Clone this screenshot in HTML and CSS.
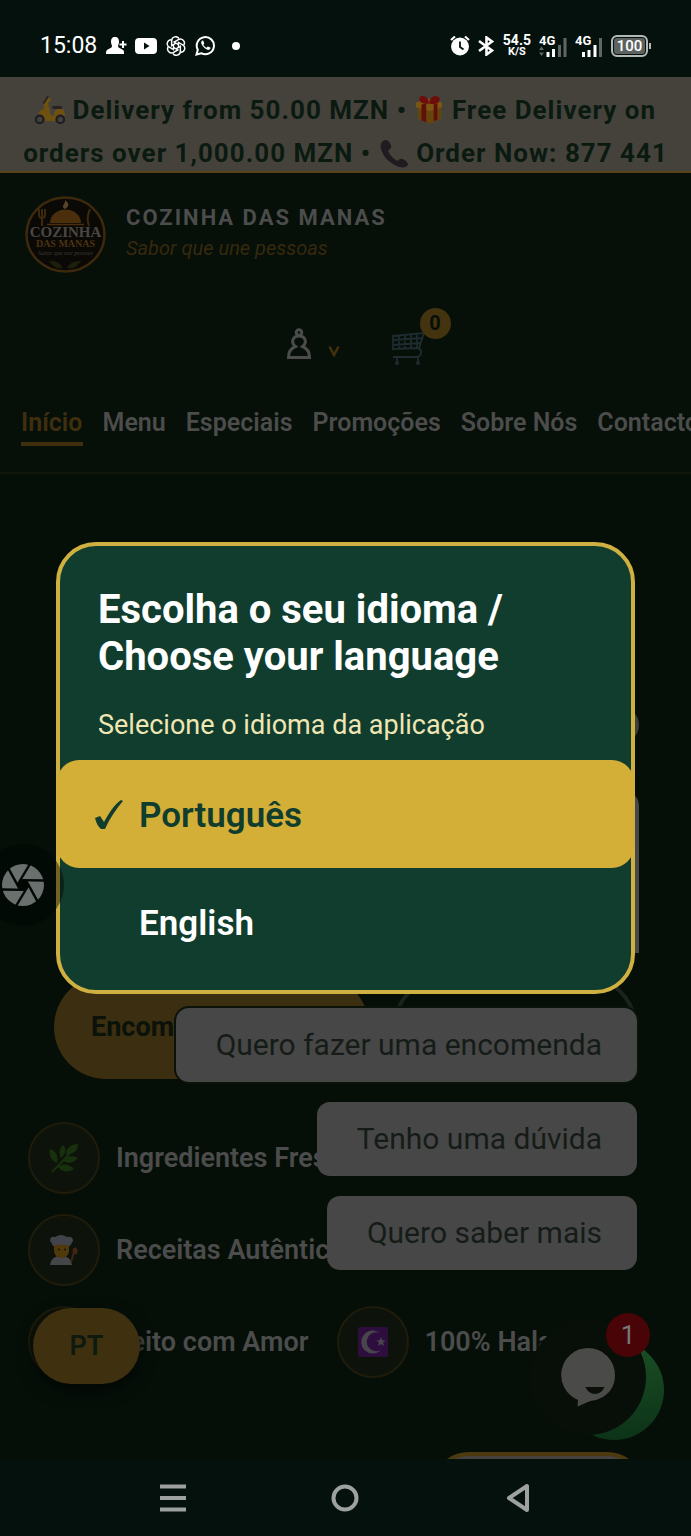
FILE: index.html
```html
<!DOCTYPE html>
<html lang="pt">
<head>
<meta charset="utf-8">
<meta name="viewport" content="width=device-width, initial-scale=1">
<title>Cozinha das Manas</title>
<link rel="stylesheet" href="styles.css">
</head>
<body>
<div class="screen">
  <div class="status">
    <div class="status-group">
      <span class="clock">15:08</span>
      <svg class="st-person" width="20" height="19" viewBox="0 0 20 19" fill="#fff"><path d="M9 1c3 0 4 2 4 5 0 2-1 3-1 4 0 2 2 2 5 4 1 .6 1 2 1 4H0c0-2 0-3 1-4 3-2 5-2 5-4 0-1-1-2-1-4 0-3 1-5 4-5z"/><path d="M17 5v7M13.500 8.500h7" stroke="#fff" stroke-width="2"/></svg>
      <svg width="22" height="16" viewBox="0 0 22 16"><rect width="22" height="16" rx="4" fill="#fff"/><path d="M9 4.500v7l5.500-3.500z" fill="#04110d"/></svg>
      <svg width="20" height="20" viewBox="1 1 22 22" fill="none" stroke="#fff" stroke-width="1.600"><path id="petal" d="M12 8.800L7.200 11.600V6.200a4.400 4.400 0 0 1 8.200-2.200"/><use href="#petal" transform="rotate(60 12 12)"/><use href="#petal" transform="rotate(120 12 12)"/><use href="#petal" transform="rotate(180 12 12)"/><use href="#petal" transform="rotate(240 12 12)"/><use href="#petal" transform="rotate(300 12 12)"/></svg>
      <svg width="21" height="21" viewBox="0 0 21 21" fill="none" stroke="#fff" stroke-width="2"><path d="M1.500 19.500l1.300-4.700a8.600 8.600 0 1 1 3.400 3.400z"/><path d="M7.200 5.500c-1.500 1-1.400 3 .5 5.500s4.500 4.300 6.300 3.800c1.300-.4 1.600-1.500 1.400-2.200l-2.600-1.200-1.200 1.400c-1.500-.6-2.600-1.700-3.300-3.100l1-1.200-1-2.700z" fill="#fff" stroke="none"/></svg>
      <svg class="st-dot" width="8" height="8" viewBox="0 0 8 8"><circle cx="4" cy="4" r="4" fill="#fff"/></svg>
    </div>
    <div class="status-group status-right">
      <svg width="20" height="21" viewBox="0 0 20 21"><circle cx="10" cy="11.500" r="9" fill="#fff"/><path d="M1 5l4-3.500M19 5l-4-3.500" stroke="#fff" stroke-width="2.200"/><path d="M10 6.500v5.500l3.500 2.500" stroke="#04110d" stroke-width="1.800" fill="none"/></svg>
      <svg width="17" height="20" viewBox="0 0 17 20" fill="none" stroke="#fff" stroke-width="2.600"><path d="M1 5l13 9.500-5.500 4V1.500L14 5.500 1 15"/></svg>
      <span class="speed"><b>54.5</b><small>K/S</small></span>
      <svg width="28" height="24" viewBox="0 0 28 24"><text x="0" y="11" class="net">4G</text><path d="M0 16l2.500-3.500 2.500 3.500zM0 18.500l2.500 3.500 2.500-3.500z" fill="#5f6664"/><path d="M9 23v-5M14.500 23v-8" stroke="#fff" stroke-width="3"/><path d="M20.500 23V11M26 23V4" stroke="#5f6664" stroke-width="3"/></svg>
      <svg width="28" height="24" viewBox="0 0 28 24"><text x="0" y="11" class="net">4G</text><path d="M8.500 23v-5M14 23v-7M20 23V11" stroke="#fff" stroke-width="3"/><path d="M25.500 23V4" stroke="#5f6664" stroke-width="3"/></svg>
      <span class="battery">100</span>
    </div>
  </div>

  <div class="app">
    <div class="banner">
      <svg class="emoji" viewBox="0 0 32 32"><path d="M11 3l4-1 2 4-3 2 2 10q0 4 4 4 0-5 4-7h6q2 4 2 8l-7 1-4 4H11Q9 20 3 20q3-5 7-5L9 7z" fill="#6e5110"/><path d="M18 12q6-1 11 0v3H19z" fill="#2b2022"/><path d="M9 9l5-8" stroke="#25222a" stroke-width="2"/><g fill="#45423c" stroke="#1f1d24" stroke-width="2.500"><circle cx="5" cy="26" r="4"/><circle cx="27" cy="26" r="4"/></g></svg>
      Delivery from 50.00 MZN •
      <svg class="emoji" viewBox="0 0 32 32"><path d="M4 12l13 4 12-4v13l-12 6-13-6z" fill="#66440e"/><path d="M2 8l14-4 14 4v5l-13 4L2 13z" fill="#7a5513"/><path d="M8 10l5-1v20l-5-2zM21 10l4-1v17l-4 2z" fill="#601008"/><path d="M16 9C4 11 3 0 10 1q5 1 6 8 1-8 7-8 7 1 3 7-3 3-10 1z" fill="#6e0d0b"/></svg>
      Free Delivery on orders over 1,000.00 MZN •
      <svg class="emoji" viewBox="0 0 32 32"><path d="M8 2C4 2 1 5 2 11c2 9 10 17 20 20 5 1 8 0 9-3 0-2-5-6-7-6-3 0-3 3-5 2-4-2-8-7-9-10 0-2 3-2 3-5 0-2-3-7-5-7z" fill="#1f1b20"/></svg>
      Order Now: 877 441
    </div>

    <header class="header">
      <div class="brand">
        <svg class="logo" viewBox="0 0 81 77">
          <ellipse cx="40.500" cy="38.500" rx="39" ry="37" fill="#0a0906" stroke="#3d290d" stroke-width="2.500"/>
          <path d="M25 27a15 13 0 0 1 31 0z" fill="#4b2f0c"/><path d="M22 28.500h37" stroke="#4b2f0c" stroke-width="1.500"/>
          <path d="M40 13c-5-3 1-5 0-9 5 4 4 6 0 9z" fill="#59442a"/>
          <path d="M14 13v6q0 3 3 3t3-3v-6M17 13v17M65 13q-4 9-1 17" stroke="#3d290d" stroke-width="2" fill="none"/>
          <text x="40.500" y="41" class="logo-a">COZINHA</text>
          <text x="40.500" y="51" class="logo-b">DAS MANAS</text>
          <text x="40.500" y="59" class="logo-c">Sabor que une pessoas</text>
          <path d="M38 72q-8 2-14-7 10-1 14 7zM42 72q8 2 14-7-10-1-14 7z" fill="#1c200b"/>
        </svg>
        <div class="brand-text">
          <div class="brand-name">COZINHA DAS MANAS</div>
          <div class="tagline">Sabor que une pessoas</div>
        </div>
      </div>
      <div class="actions">
        <button class="icon-btn" aria-label="Conta">
          <svg width="26" height="32" viewBox="0 0 26 32" fill="none" stroke="#4b4c4b" stroke-width="3"><circle cx="13" cy="4.500" r="2.800"/><path d="M2.500 29.500h21c0-6-2-9-7-11 5-4 3-10.500-3.500-10.500S4.500 14.500 9.500 18.500c-5 2-7 5-7 11z"/></svg>
          <svg class="caret" width="12" height="12" viewBox="0 0 12 12" fill="none" stroke="#43310e" stroke-width="2.600"><path d="M1.500 1.500l4.500 8.500 4.500-8.500"/></svg>
        </button>
        <button class="icon-btn cart" aria-label="Carrinho">
          <svg width="36" height="34" viewBox="0 0 36 34" fill="none" stroke="#1e2c30" stroke-width="1.800"><path d="M1 4l31-3-5 15-26 1zM2 8l28-2M2 13l26-2M7 4v13M13 3v14M19 3v13M25 2v14M27 16c4 4 2 9-3 9H1M32 1l3-1M5 25v6M26 25v6"/><circle cx="5" cy="31" r="1.200"/><circle cx="26" cy="31" r="1.200"/></svg>
          <span class="cart-count">0</span>
        </button>
      </div>
      <nav class="nav">
        <a href="#" class="active">Início</a><a href="#">Menu</a><a href="#">Especiais</a><a href="#">Promoções</a><a href="#">Sobre Nós</a><a href="#">Contactos</a>
      </nav>
    </header>

    <main class="hero">
      <div class="cta">
        <button class="cta-main">Encomendar Agora</button>
        <button class="cta-alt">Ver Menu</button>
      </div>
      <ul class="features">
        <li><span class="ring"><svg width="30" height="30" viewBox="0 0 30 30" fill="#17300d"><path d="M3 29C10 22 17 15 26 4" stroke="#17300d" stroke-width="2"/><path d="M8 20C1 17 0 11 1 6c6 2 9 7 7 14zM12 15c-3-5-1-10 2-13 4 4 3 9-2 13zM17 11c0-6 5-10 12-10 0 7-5 11-12 10zM14 18c3-5 9-6 15-3-4 5-10 6-15 3zM9 24c5-4 11-3 16 2-6 4-12 3-16-2z"/></svg></span>Ingredientes Frescos</li>
        <li><span class="ring"><svg width="30" height="30" viewBox="0 0 30 30"><path d="M1 30q1-9 11-9t11 9z" fill="#45464a"/><path d="M5 9h15v7q-1 7-7.500 7T5 16z" fill="#503a0b"/><path d="M4 11q-1-3-3-5 0-5 5-4 6-4 12 0 6-1 6 4l-3 5q-9-3-17 0z" fill="#42434a"/><path d="M9 14.500h2M15 14.500h2" stroke="#161008" stroke-width="1.600"/><path d="M22 27l3-10" stroke="#412416" stroke-width="2"/><ellipse cx="26" cy="16" rx="2.500" ry="3.500" fill="#412416"/></svg></span>Receitas Autênticas</li>
        <li><span class="ring"></span>Feito com Amor</li>
        <li><span class="ring"><svg width="30" height="30" viewBox="0 0 30 30"><rect width="30" height="30" rx="2" fill="#2e0e3f"/><path d="M22 6A11.500 11.500 0 1 0 23 23 9.500 9.500 0 1 1 22 6z" fill="#48454c"/><path d="M23 10l1.300 3.200 3.400.2-2.600 2.200.9 3.400-3-1.900-3 1.900.9-3.400-2.600-2.200 3.400-.2z" fill="#48454c"/></svg></span>100% Halal</li>
      </ul>
      <div class="peek"></div>
    </main>

    <div class="chat-popup">
      <div class="chat-close"></div>
      <div class="chat-card"></div>
      <button class="chat-option first">Quero fazer uma encomenda</button>
      <button class="chat-option">Tenho uma dúvida</button>
      <button class="chat-option">Quero saber mais</button>
    </div>
    <button class="lang">PT</button>
    <div class="whatsapp"></div>
    <button class="chat-fab" aria-label="Chat">
      <svg width="56" height="60" viewBox="0 0 56 60"><path d="M28 1a27 27 0 0 0-10 52l-.5 6.500 13-5.500C46 52 55 42 55 28A27 27 0 0 0 28 1z" fill="#4a4a49"/><path d="M25.500 40h19q-3 7-9.500 7t-9.500-7z" fill="#0a0f08"/></svg>
      <span class="chat-count">1</span>
    </button>
  </div>

  <div class="navbar">
    <button aria-label="Recentes"><svg width="26" height="28" viewBox="0 0 26 28" stroke="#9da19f" stroke-width="4"><path d="M0 2.500h26M0 14h26M0 25.500h26"/></svg></button>
    <button aria-label="Início"><svg width="28" height="28" viewBox="0 0 28 28" fill="none" stroke="#9da19f" stroke-width="4"><circle cx="14" cy="14" r="11.500"/></svg></button>
    <button aria-label="Voltar"><svg width="24" height="30" viewBox="0 0 24 30" fill="none" stroke="#9da19f" stroke-width="4" stroke-linejoin="round"><path d="M21 3v24L3 15z"/></svg></button>
  </div>
</div>

<div class="overlay">
  <section class="modal" role="dialog" aria-labelledby="dlg-title">
    <h1 id="dlg-title">Escolha o seu idioma / Choose your language</h1>
    <p>Selecione o idioma da aplicação</p>
    <button class="option selected"><span class="tick"><svg width="28" height="30" viewBox="0 0 28 30"><path d="M0 18l5-2 4 6C14 13 19 5 26 0l2 1C21 9 15 18 10 29H6q-4-3-6-11z" fill="#113d2e"/></svg></span>Português</button>
    <button class="option"><span class="tick"></span>English</button>
  </section>
</div>

<button class="shutter" aria-label="Captura">
  <svg width="42" height="42" viewBox="0 0 42 42"><circle cx="21" cy="21" r="21" fill="#6a706d"/><g stroke="#020704" stroke-width="2.400"><path id="blade" d="M28 0L16 20"/><use href="#blade" transform="rotate(60 21 21)"/><use href="#blade" transform="rotate(120 21 21)"/><use href="#blade" transform="rotate(180 21 21)"/><use href="#blade" transform="rotate(240 21 21)"/><use href="#blade" transform="rotate(300 21 21)"/></g><circle cx="21" cy="21" r="5" fill="#020704"/></svg>
</button>
</body>
</html>
```

FILE: styles.css
```css
* { box-sizing: border-box; }
body {
  margin: 0;
  background: #04110d;
  font-family: Roboto, "Noto Sans", sans-serif;
  color: #4b4c4b;
}
button {
  font: inherit;
  color: inherit;
  border: 0;
  padding: 0;
  background: none;
}
svg { display: block; flex: none; }

.screen {
  display: flex;
  flex-direction: column;
  height: 100vh;
  overflow: hidden;
}

/* system status bar */
.status {
  flex: none;
  height: 77px;
  padding: 14px 43px 0 40px;
  display: flex;
  align-items: center;
  justify-content: space-between;
  color: #fff;
}
.status-group { display: flex; align-items: center; gap: 9px; }
.clock { font-size: 23px; }
.st-person { overflow: visible; }
.st-dot { margin-left: 7px; }
.status-right { gap: 8px; }
.speed { display: flex; flex-direction: column; align-items: center; line-height: 12px; }
.speed b { font-size: 14px; }
.speed small { font-size: 11px; font-weight: 700; }
.net { font: 700 13px Roboto, sans-serif; fill: #fff; }
.battery {
  position: relative;
  width: 37px;
  height: 22px;
  border: 2px solid #b4b8b6;
  border-radius: 6px;
  background: #5c6260;
  box-shadow: inset 0 0 0 1px #04110d;
  font-size: 15px;
  font-weight: 500;
  line-height: 18px;
  text-align: center;
}
.battery::after {
  content: "";
  position: absolute;
  right: -5px;
  top: 6px;
  width: 2px;
  height: 6px;
  background: #b4b8b6;
}

/* app page */
.app {
  position: relative;
  flex: 1;
  min-height: 0;
  overflow: hidden;
  background: #050f08;
}
.banner {
  height: 96px;
  padding: 12px 20px 0;
  overflow: hidden;
  background: #45423c;
  border-bottom: 2px solid #59431a;
  color: #0a1a10;
  font-size: 26px;
  font-weight: 700;
  line-height: 43px;
  letter-spacing: 1px;
  text-align: center;
}
.emoji { display: inline-block; width: 30px; height: 30px; vertical-align: -6px; }

.header {
  padding: 23px 20px 26px 21px;
  background: #060f08;
  border-bottom: 2px solid #11170b;
}
.brand { display: flex; align-items: center; gap: 20px; padding-left: 4px; }
.brand-text { padding-bottom: 4px; }
.logo { width: 81px; height: 77px; }
.logo-a, .logo-b { font-family: "Liberation Serif", serif; font-weight: 700; text-anchor: middle; }
.logo-a { font-size: 15px; fill: #4a4743; }
.logo-b { font-size: 10px; fill: #4b330f; }
.logo-c { font: italic 6px "Liberation Serif", serif; text-anchor: middle; fill: #3b3934; }
.brand-name { font-size: 22px; font-weight: 700; letter-spacing: 2px; line-height: 30px; }
.tagline { font-size: 20px; font-style: italic; line-height: 30px; color: #36290d; }
.actions {
  display: flex;
  align-items: flex-start;
  justify-content: center;
  gap: 52px;
  padding: 55px 0 42px;
  margin-left: 21px;
}
.icon-btn { display: flex; align-items: flex-end; gap: 16px; }
.caret { margin-bottom: 3px; }
.cart { position: relative; margin-top: 4px; }
.cart-count {
  position: absolute;
  left: 28px;
  top: -24px;
  width: 31px;
  height: 31px;
  border-radius: 50%;
  background: #43330f;
  color: #080f08;
  font-size: 20px;
  font-weight: 700;
  line-height: 31px;
}
.nav { display: flex; gap: 20px; white-space: nowrap; }
.nav a {
  padding-bottom: 4px;
  color: inherit;
  font-size: 25px;
  font-weight: 600;
  line-height: 30px;
  text-decoration: none;
  border-bottom: 4px solid transparent;
}
.nav .active { color: #3f2f0f; border-color: #3f2f0f; }

.hero { padding-top: 501px; }
.cta { display: flex; gap: 24px; padding: 0 54px; }
.cta button {
  height: 104px;
  border-radius: 52px;
  font-size: 27px;
  font-weight: 700;
  white-space: nowrap;
}
.cta .cta-main { flex: 13 1 0; padding-left: 37px; text-align: left; background: #3c2e10; color: #0a1209; }
.cta .cta-alt { flex: 11 1 0; border: 4px solid #1c231e; }
.features {
  display: flex;
  flex-wrap: wrap;
  gap: 20px 28px;
  margin: 43px 0 0;
  padding: 0 48px 0 28px;
  list-style: none;
  font-size: 27px;
  font-weight: 600;
}
.features li { display: flex; align-items: center; gap: 16px; }
.ring {
  display: grid;
  place-items: center;
  width: 72px;
  height: 72px;
  border: 2px solid #1f1c0c;
  border-radius: 50%;
  background: #0d130a;
}
.peek {
  width: 214px;
  height: 120px;
  margin: 74px 46px 0 auto;
  border: 4px solid #4d390f;
  border-radius: 38px;
  background: #454340;
}

/* floating chat, language and contact controls */
.chat-popup {
  position: absolute;
  right: 54px;
  bottom: 189px;
  display: flex;
  flex-direction: column;
  align-items: flex-end;
  gap: 20px;
}
.chat-close { width: 36px; height: 36px; border-radius: 50%; background: #3d3f3d; margin: 0 -2px 27px 0; }
.chat-card { width: 460px; height: 163px; border-radius: 16px 16px 0 0; background: #474747; margin: 0 -2px 35px 0; }
.chat-option {
  padding: 0 35px 0 40px;
  border-radius: 13px;
  background: #474747;
  color: #151c17;
  font-size: 30px;
  line-height: 74px;
  white-space: nowrap;
}
.chat-option.first { box-shadow: 0 0 0 2px #0a120a; }
.lang {
  position: absolute;
  left: 33px;
  bottom: 75px;
  width: 107px;
  height: 76px;
  border-radius: 38px;
  background: #3f3010;
  box-shadow: 0 6px 16px #030805;
  color: #0f1a0e;
  font-size: 27px;
  font-weight: 600;
}
.whatsapp {
  position: absolute;
  right: 27px;
  bottom: 19px;
  width: 100px;
  height: 100px;
  border-radius: 50%;
  background: linear-gradient(#1b4f24, #0c3318);
}
.chat-fab {
  position: absolute;
  right: 45px;
  bottom: 24px;
  display: grid;
  place-items: center;
  width: 116px;
  height: 116px;
  border-radius: 50%;
  background: #080f08;
}
.chat-count {
  position: absolute;
  right: -4px;
  top: -6px;
  width: 44px;
  height: 44px;
  border-radius: 50%;
  background: #480407;
  color: #777;
  font-size: 26px;
  line-height: 44px;
}

.navbar {
  flex: none;
  height: 77px;
  padding: 0 87px;
  display: flex;
  align-items: center;
}
.navbar button { flex: 1; display: grid; place-items: center; }

/* language dialog */
.overlay {
  position: fixed;
  inset: 0;
  display: flex;
  align-items: center;
  padding: 0 56px;
}
.modal {
  width: 100%;
  padding: 40px 0 14px;
  border: 4px solid #cfb040;
  border-radius: 40px;
  background: #113d2e;
  color: #fff;
}
.modal h1 { margin: 0; padding: 0 38px; font-size: 40px; line-height: 47px; }
.modal p { margin: 29px 38px 19px; font-size: 27px; line-height: 32px; color: #efe6b4; }
.option {
  display: flex;
  align-items: center;
  gap: 16px;
  width: calc(100% + 6px);
  height: 108px;
  margin: 0 -3px;
  padding: 2px 38px 0;
  border-radius: 22px;
  font-size: 35px;
  font-weight: 600;
}
.option.selected { background: #d3af37; color: #113d2e; }
.tick { width: 28px; }

.shutter {
  position: fixed;
  left: -18px;
  top: 844px;
  display: grid;
  place-items: center;
  width: 82px;
  height: 82px;
  border-radius: 50%;
  background: rgba(0, 4, 2, .45);
}
```
